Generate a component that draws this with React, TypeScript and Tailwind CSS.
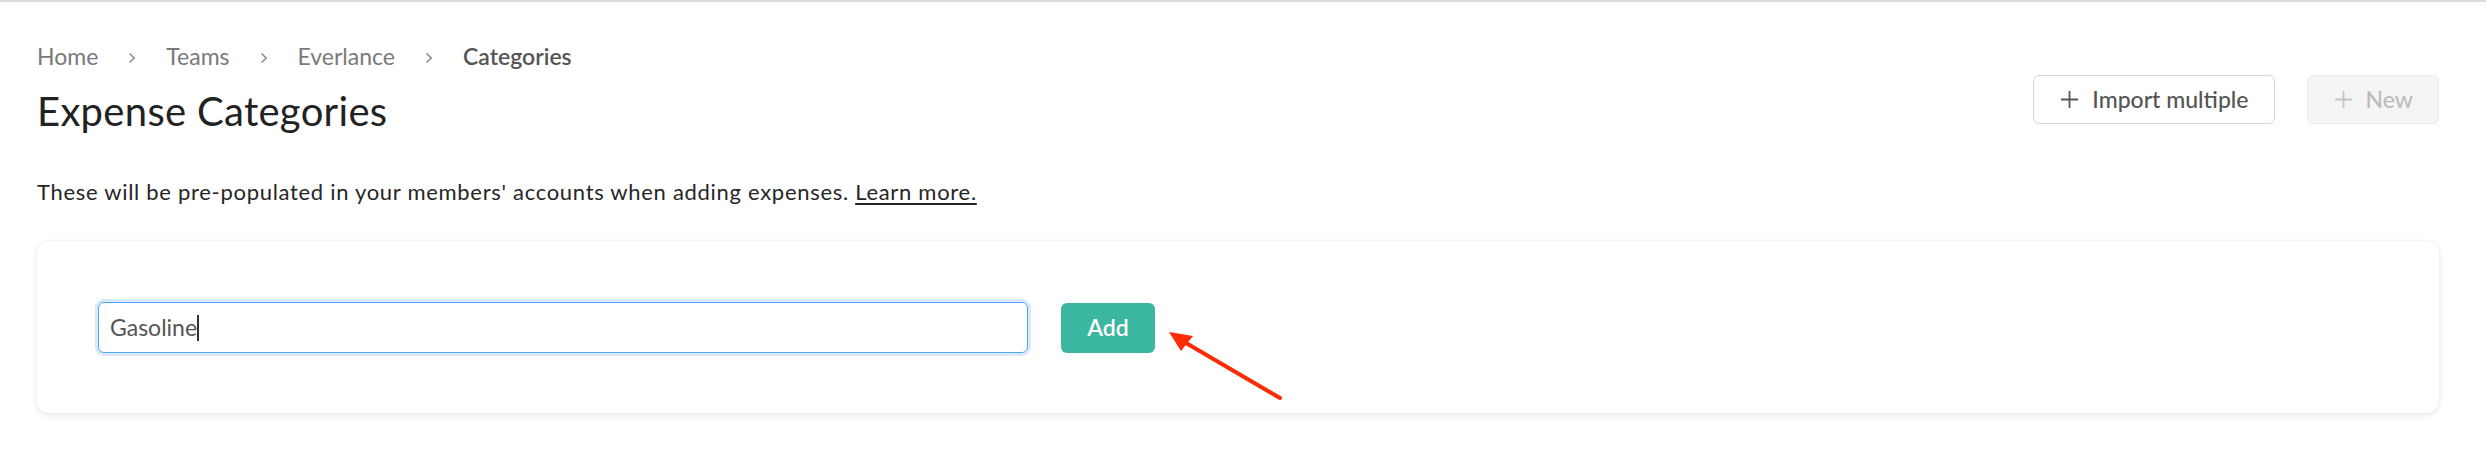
function Chevron() {
  return (
    <svg width="8" height="12" viewBox="0 0 8 12" className="mx-[30px] mt-[4px] text-[#8c8c8c]">
      <path d="M1.5 1.5 6.2 6l-4.7 4.5" fill="none" stroke="currentColor" strokeWidth="1.6" />
    </svg>
  );
}

function PlusIcon({ className }: { className?: string }) {
  return (
    <svg width="17" height="17" viewBox="0 0 17 17" className={className}>
      <path d="M8.5 0v17M0 8.5h17" stroke="currentColor" strokeWidth="1.8" />
    </svg>
  );
}

export default function App() {
  return (
    <div className="min-h-[450px] bg-white border-t-2 border-[#dcdcdc] font-['Lato',sans-serif]">
      <div className="pl-[37px] pr-[47px] pt-[40px]">
        {/* Header */}
        <div className="flex items-start justify-between">
          <div>
            <nav className="flex items-center h-[28px] text-[23px] leading-[28px] text-[#7a7a7a]">
              <span>Home</span>
              <Chevron />
              <span>Teams</span>
              <Chevron />
              <span>Everlance</span>
              <Chevron />
              <span className="font-semibold text-[#555]">Categories</span>
            </nav>
            <h1 className="mt-[17px] text-[40px] leading-[48px] tracking-[0.3px] font-normal text-[#222]">
              Expense Categories
            </h1>
          </div>
          <div className="flex items-center gap-[32px] mt-[33px]">
            <button className="flex items-center gap-[14px] h-[49px] pl-[27px] pr-[25px] rounded-[6px] border border-[#d6d6d6] bg-white text-[23px] font-medium text-[#555]">
              <PlusIcon className="text-[#555]" />
              Import multiple
            </button>
            <button
              disabled
              className="flex items-center gap-[14px] h-[49px] pl-[27px] pr-[25px] rounded-[6px] border border-[#ececec] bg-[#f5f5f5] text-[23px] font-medium text-[#bcbcbc]"
            >
              <PlusIcon className="text-[#c4c4c4]" />
              New
            </button>
          </div>
        </div>

        {/* Description */}
        <p className="mt-[42px] text-[22px] leading-[30px] tracking-[0.7px] text-[#262626]">
          These will be pre-populated in your members' accounts when adding expenses.{" "}
          <a className="underline underline-offset-[3px]">Learn more.</a>
        </p>

        {/* Card */}
        <div className="relative mt-[34px] rounded-[12px] bg-white shadow-[0_2px_6px_rgba(0,0,0,0.10),0_0_2px_rgba(0,0,0,0.06)] pl-[61px] pt-[61px] pb-[60px]">
          <div className="flex items-center gap-[33px]">
            <div
              role="textbox"
              className="flex items-center w-[930px] h-[51px] pl-[11px] rounded-[6px] border-[1.5px] border-[#4da9f2] ring-[3px] ring-[#d9e9fb] text-[23px] text-[#555]"
            >
              <span>Gasoline</span>
              <span className="w-[2px] h-[26px] bg-[#333]" />
            </div>
            <button className="w-[94px] h-[50px] rounded-[6px] bg-[#3bb6a1] text-[23px] font-semibold text-white">
              Add
            </button>
          </div>

          {/* Annotation arrow */}
          <svg
            width="130"
            height="80"
            viewBox="0 0 130 80"
            className="absolute left-[1123px] top-[84px]"
          >
            <path d="M26 18 120 73" stroke="#ff2a06" strokeWidth="4" strokeLinecap="round" />
            <path d="M9 7 21 26 33 11Z" fill="#ff2a06" />
          </svg>
        </div>
      </div>
    </div>
  );
}
